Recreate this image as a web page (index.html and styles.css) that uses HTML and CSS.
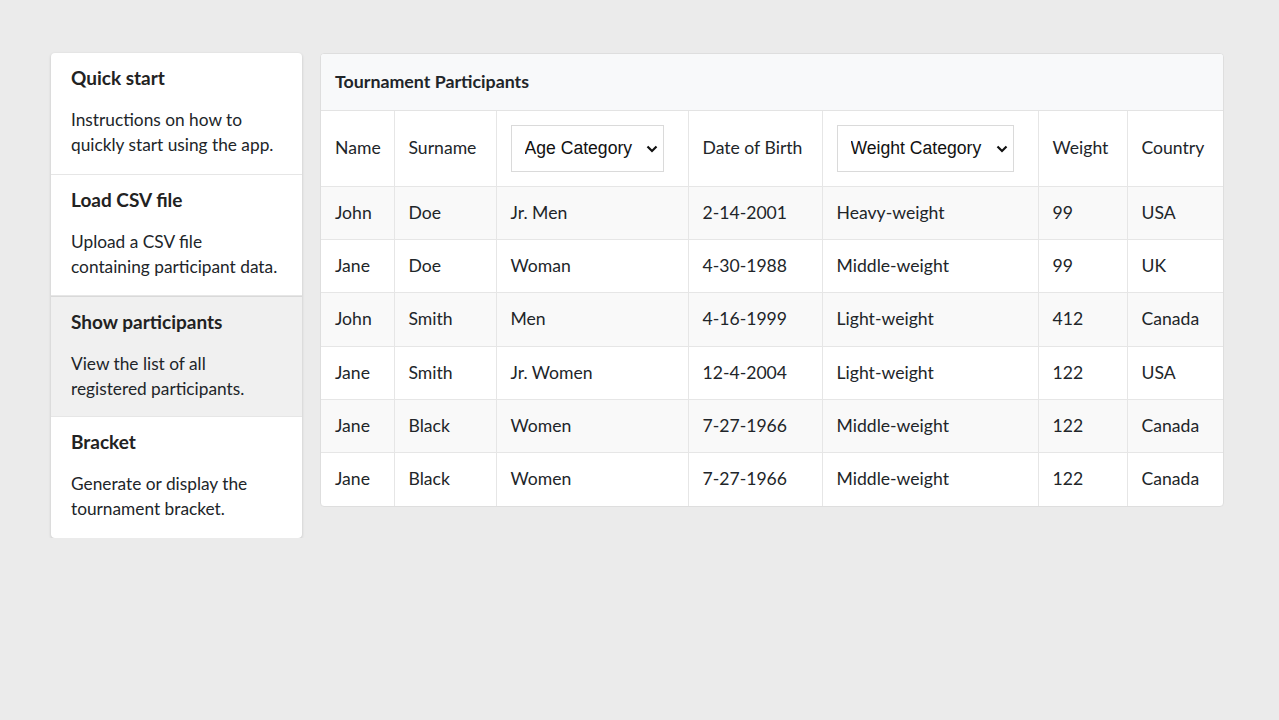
FILE: index.html
```html
<!DOCTYPE html>
<html lang="en">
<head>
<meta charset="utf-8">
<title>Tournament Participants</title>
<link rel="stylesheet" href="styles.css">
</head>
<body>
<div class="layout">
  <nav class="sidebar">
    <a class="nav-item">
      <div class="nav-title">Quick start</div>
      <div class="nav-desc">Instructions on how to quickly start using the app.</div>
    </a>
    <a class="nav-item">
      <div class="nav-title">Load CSV file</div>
      <div class="nav-desc">Upload a CSV file containing participant data.</div>
    </a>
    <a class="nav-item active">
      <div class="nav-title">Show participants</div>
      <div class="nav-desc">View the list of all registered participants.</div>
    </a>
    <a class="nav-item">
      <div class="nav-title">Bracket</div>
      <div class="nav-desc">Generate or display the tournament bracket.</div>
    </a>
  </nav>
  <section class="card">
    <div class="card-header">Tournament Participants</div>
    <table class="table">
      <colgroup>
        <col class="c-name"><col class="c-surname"><col class="c-age"><col class="c-dob"><col class="c-wcat"><col class="c-weight"><col class="c-country">
      </colgroup>
      <thead>
        <tr>
          <th>Name</th>
          <th>Surname</th>
          <th>
            <span class="select-wrap age">
              <select class="select"><option>Age Category</option></select>
              <svg class="chev" width="12" height="8" viewBox="0 0 12 8"><path d="M1.5 1.5 6 6l4.5-4.5" fill="none" stroke="#111" stroke-width="2.2"/></svg>
            </span>
          </th>
          <th>Date of Birth</th>
          <th>
            <span class="select-wrap wcat">
              <select class="select"><option>Weight Category</option></select>
              <svg class="chev" width="12" height="8" viewBox="0 0 12 8"><path d="M1.5 1.5 6 6l4.5-4.5" fill="none" stroke="#111" stroke-width="2.2"/></svg>
            </span>
          </th>
          <th>Weight</th>
          <th>Country</th>
        </tr>
      </thead>
      <tbody>
        <tr><td>John</td><td>Doe</td><td>Jr. Men</td><td>2-14-2001</td><td>Heavy-weight</td><td>99</td><td>USA</td></tr>
        <tr><td>Jane</td><td>Doe</td><td>Woman</td><td>4-30-1988</td><td>Middle-weight</td><td>99</td><td>UK</td></tr>
        <tr><td>John</td><td>Smith</td><td>Men</td><td>4-16-1999</td><td>Light-weight</td><td>412</td><td>Canada</td></tr>
        <tr><td>Jane</td><td>Smith</td><td>Jr. Women</td><td>12-4-2004</td><td>Light-weight</td><td>122</td><td>USA</td></tr>
        <tr><td>Jane</td><td>Black</td><td>Women</td><td>7-27-1966</td><td>Middle-weight</td><td>122</td><td>Canada</td></tr>
        <tr><td>Jane</td><td>Black</td><td>Women</td><td>7-27-1966</td><td>Middle-weight</td><td>122</td><td>Canada</td></tr>
      </tbody>
    </table>
  </section>
</div>
</body>
</html>
```

FILE: styles.css
```css
* { box-sizing: border-box; }
html, body { margin: 0; }
body {
  background: #ebebeb;
  font-family: Lato, "Open Sans", sans-serif;
  color: #212529;
  font-size: 17.6px;
}
.layout {
  display: flex;
  align-items: flex-start;
  gap: 18px;
  padding: 53px 55px 0 51px;
}
.sidebar {
  width: 251px;
  flex: none;
  background: #fff;
  border-radius: 4px;
  box-shadow: 0 1px 3px rgba(0,0,0,0.18);
  overflow: hidden;
  display: flex;
  flex-direction: column;
}
.nav-item {
  display: block;
  height: 121px;
  padding: 12px 20px 0 20px;
  border-bottom: 1px solid #e6e6e6;
  color: #212529;
  text-decoration: none;
}
.nav-item:first-child { height: 122px; }
.nav-item:last-child { border-bottom: none; }
.nav-item.active {
  background: #f0f0f0;
  border-top: 1px solid #d9d9d9;
}
.nav-title {
  font-size: 19px;
  font-weight: 700;
  line-height: 26px;
  color: #222;
}
.nav-desc {
  margin-top: 16px;
  font-size: 17.3px;
  line-height: 25px;
}
.card {
  flex: 1;
  background: #fff;
  border: 1px solid #dedede;
  border-radius: 4px;
  overflow: hidden;
}
.card-header {
  height: 57px;
  padding: 0 14px 3px 14px;
  display: flex;
  align-items: center;
  background: #f8f9fa;
  border-bottom: 1px solid #e3e3e3;
  font-weight: 700;
  font-size: 17.8px;
  color: #212529;
}
.table {
  width: 100%;
  border-collapse: collapse;
  table-layout: fixed;
}
.c-name { width: 73px; }
.c-surname { width: 102px; }
.c-age { width: 192px; }
.c-dob { width: 134px; }
.c-wcat { width: 216px; }
.c-weight { width: 89px; }
.c-country { width: auto; }
.table th, .table td {
  padding: 13px 14px;
  text-align: left;
  font-weight: 400;
  font-size: 17.6px;
  line-height: 1.5;
  border-right: 1px solid #e6e6e6;
  border-bottom: 1px solid #e6e6e6;
  white-space: nowrap;
  vertical-align: middle;
}
.table th:last-child, .table td:last-child { border-right: none; }
.table tbody tr:last-child td { border-bottom: none; }
.table tbody tr:nth-child(odd) { background: #f9f9f9; }
.table th { height: 75px; }
.select-wrap {
  position: relative;
  display: inline-block;
  vertical-align: middle;
}
.select {
  appearance: none;
  -webkit-appearance: none;
  height: 47px;
  border: 1px solid #dadada;
  border-radius: 0;
  background: #fff;
  font-family: "Liberation Sans", Arial, sans-serif;
  font-size: 17.6px;
  color: #111;
  padding: 0 20px 0 13px;
  display: block;
}
.select-wrap.age .select { width: 153px; }
.select-wrap.wcat .select { width: 177px; }
.chev {
  position: absolute;
  right: 6px;
  top: 20px;
  pointer-events: none;
}
```
